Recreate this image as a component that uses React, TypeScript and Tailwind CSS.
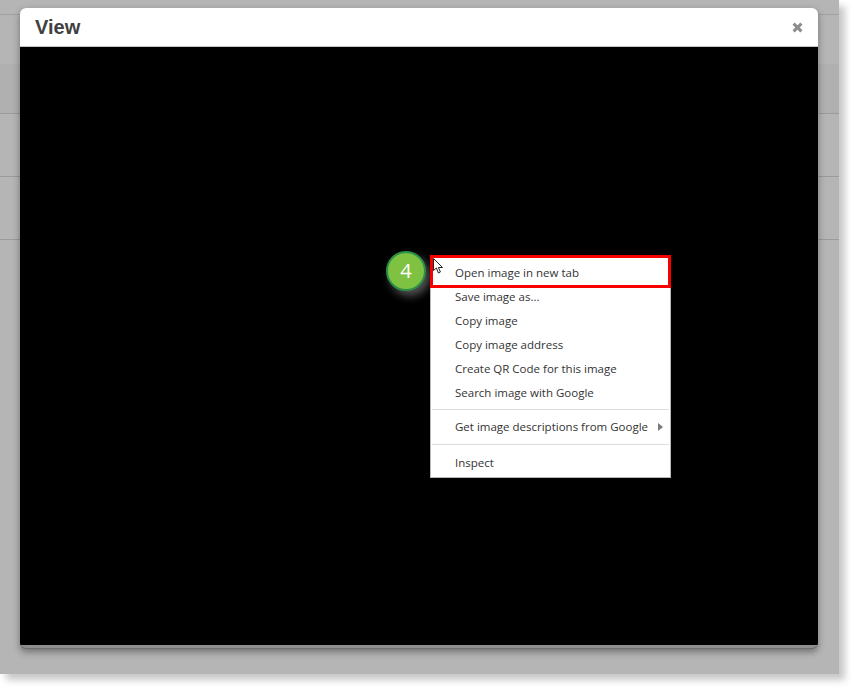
const items1 = ["Save image as...", "Copy image", "Copy image address", "Create QR Code for this image", "Search image with Google"];

export default function App() {
  return (
    <div className="relative w-[854px] h-[689px] bg-white overflow-hidden font-['Liberation_Sans',sans-serif]">
      {/* dimmed page behind the modal */}
      <div className="w-[839px] h-[674px] bg-[#b5b5b5] shadow-[6px_6px_7px_rgba(0,0,0,0.22)] flex flex-col">
        <div className="h-[14px] shrink-0 border-b border-[#a0a0a0] box-content" />
        <div className="h-[49px] shrink-0" />
        <div className="h-[49px] shrink-0 bg-[#b0b0b0]" />
        <div className="h-[63px] shrink-0 border-t border-[#9a9a9a]" />
        <div className="h-[63px] shrink-0 border-t border-[#9a9a9a]" />
        <div className="h-[63px] shrink-0 border-t border-[#9a9a9a]" />
      </div>

      {/* modal */}
      <div className="absolute left-[20px] top-[8px] w-[798px] h-[641px] rounded-[6px] flex flex-col overflow-hidden bg-[#8e8e8e] border-b border-[#6e6e6e] shadow-[0_3px_7px_rgba(0,0,0,0.38)]">
        <div className="h-[38px] shrink-0 bg-white flex items-center justify-between pl-[15px] pr-[15px]">
          <span className="text-[20px] leading-none font-bold text-[#404040]">View</span>
          <span className="text-[#8c8c8c]">
            <svg width="11" height="11" viewBox="0 0 11 11" aria-hidden="true">
              <path d="M1.6 1.6 L9.4 9.4 M9.4 1.6 L1.6 9.4" stroke="currentColor" strokeWidth="3" />
            </svg>
          </span>
        </div>
        <div className="h-px shrink-0 bg-[#c4c4c4]" />
        <div className="h-[598px] shrink-0 bg-black" />
      </div>

      {/* step badge */}
      <div className="absolute left-[386px] top-[251px] w-[40px] h-[40px] rounded-full bg-[#7fc241] border-[2px] border-[#2a8f48] shadow-[4px_5px_9px_rgba(255,255,255,0.32)] flex items-center justify-center text-white text-[20px] leading-none font-['Open_Sans',sans-serif]">
        4
      </div>

      {/* context menu */}
      <div className="absolute left-[430px] top-[256px] w-[241px] h-[222px] bg-white border border-[#b8b8b8] flex flex-col text-[11.5px] leading-[24px] text-[#333] font-['Open_Sans',sans-serif]">
        <div className="h-[4px] shrink-0" />
        <div className="h-[24px] shrink-0 pl-[24px]">Open image in new tab</div>
        {items1.map((t) => (
          <div key={t} className="h-[24px] shrink-0 pl-[24px]">{t}</div>
        ))}
        <div className="h-px shrink-0 bg-[#dcdcdc] mx-[1px] mt-[4px]" />
        <div className="h-[34px] shrink-0 pl-[24px] flex items-center justify-between pr-[7px]">
          <span>Get image descriptions from Google</span>
          <svg width="5" height="8" viewBox="0 0 5 8" aria-hidden="true">
            <path d="M0 0 L5 4 L0 8 Z" fill="#7a7a7a" />
          </svg>
        </div>
        <div className="h-px shrink-0 bg-[#dcdcdc] mx-[1px]" />
        <div className="flex-1 pl-[24px] pt-[4px] flex items-center">Inspect</div>
      </div>

      {/* red highlight */}
      <div className="absolute left-[430px] top-[255px] w-[241px] h-[33px] border-[3px] border-[#f80000]" />

      {/* pointer */}
      <svg className="absolute left-[433px] top-[258px]" width="11" height="18" viewBox="0 0 11 18" aria-hidden="true">
        <path d="M0.5 0.5 L0.5 12.5 L3.4 10 L5.4 15 L7.4 14 L5.4 9.5 L9.5 9.5 Z" fill="#fff" stroke="#222" strokeWidth="1" />
      </svg>
    </div>
  );
}
